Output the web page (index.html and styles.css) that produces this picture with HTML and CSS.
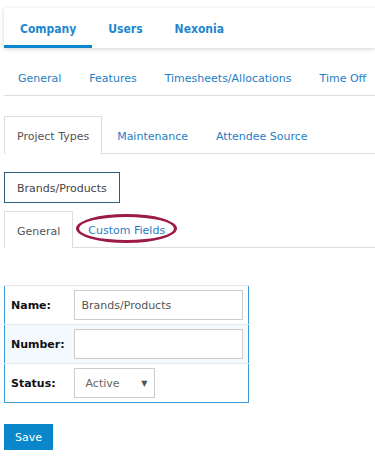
FILE: index.html
```html
<!DOCTYPE html>
<html>
    <head>
        <title>Settings - Brands/Products</title>
        <link rel="stylesheet" href="styles.css">
    </head>
    <body>
        <div class="page">
            <nav class="topnav">
                <a class="active">Company</a>
                <a>Users</a>
                <a>Nexonia</a>
            </nav>

            <nav class="subnav">
                <a>General</a>
                <a>Features</a>
                <a>Timesheets/Allocations</a>
                <a>Time Off</a>
            </nav>

            <div class="tabs main-tabs">
                <a class="active">Project Types</a>
                <a>Maintenance</a>
                <a>Attendee Source</a>
            </div>

            <div class="crumb">Brands/Products</div>

            <div class="tabs detail-tabs">
                <a class="active">General</a>
                <a class="circled">Custom Fields</a>
            </div>

            <table class="form">
                <tr>
                    <td class="label">Name:</td>
                    <td><input type="text" value="Brands/Products"></td>
                </tr>
                <tr class="alt">
                    <td class="label">Number:</td>
                    <td><input type="text" value=""></td>
                </tr>
                <tr>
                    <td class="label">Status:</td>
                    <td>
                        <div class="select">
                            <span>Active</span>
                            <span class="arrow">&#9660;</span>
                        </div>
                    </td>
                </tr>
            </table>

            <button class="save">Save</button>
        </div>
    </body>
</html>
```

FILE: styles.css
```css
*{
    margin: 0;
    padding: 0;
    box-sizing: border-box;
}
body{
    background: #fff;
    font-family: "DejaVu Sans", Verdana, sans-serif;
    font-size: 11px;
    color: #555;
}
a{
    color: #1f7dc4;
    text-decoration: none;
}
.page{
    padding: 8px 0 0 4px;
}

/* top navigation */
.topnav{
    display: flex;
    height: 40px;
    background: #fff;
    box-shadow: 0 1px 4px rgba(0,0,0,0.18);
}
.topnav a{
    display: flex;
    align-items: center;
    padding: 5px 16px 0;
    font-family: "DejaVu Sans Condensed", "DejaVu Sans", sans-serif;
    font-size: 12px;
    font-weight: bold;
    color: #1f86d0;
    border-bottom: 3px solid transparent;
}
.topnav a.active{
    border-bottom-color: #0a86cd;
}

/* second level */
.subnav{
    display: flex;
    height: 48px;
    align-items: center;
    border-bottom: 1px solid #ddd;
    padding-top: 13px;
    white-space: nowrap;
    overflow: hidden;
}
.subnav a{
    padding: 0 14px;
}

/* tab strips */
.tabs{
    display: flex;
    border-bottom: 1px solid #ddd;
}
.tabs a{
    display: flex;
    align-items: center;
    padding: 2px 12px 0;
    margin-right: 2px;
    border: 1px solid transparent;
    border-bottom: 0;
}
.tabs a.active{
    color: #555;
    border-color: #ddd;
    background: #fff;
    margin-bottom: -1px;
}
.main-tabs{
    margin-top: 20px;
    height: 38px;
}
.detail-tabs{
    margin-top: 8px;
    height: 37px;
}
.crumb{
    display: flex;
    align-items: center;
    width: fit-content;
    margin-top: 18px;
    height: 31px;
    padding: 1px 12px 0;
    border: 1px solid #2b5f7c;
    color: #444;
}

.circled{
    position: relative;
}
.circled::after{
    content: "";
    position: absolute;
    left: 0;
    right: 0;
    top: 2px;
    bottom: 4px;
    border: 3px solid #9c1a47;
    border-radius: 50%;
}

/* form */
.form{
    margin-top: 37px;
    border-collapse: collapse;
    border: 1px solid #3c9ad9;
    font-size: 11px;
}
.form tr{
    height: 39px;
    border-top: 1px solid #e2e8ec;
}
.form tr.alt{
    background: #f4f9fd;
}
.form td{
    padding: 0 5px 0 0;
}
.form td.label{
    width: 69px;
    padding: 1px 0 0 6px;
    font-weight: bold;
    color: #111;
}
.form input{
    display: block;
    width: 169px;
    height: 30px;
    border: 1px solid #ccc;
    background: #fff;
    padding: 1px 7px 0;
    font-family: "DejaVu Sans", Verdana, sans-serif;
    font-size: 11px;
    color: #555;
    outline: 0;
}
.select{
    display: flex;
    align-items: center;
    justify-content: space-between;
    width: 81px;
    height: 30px;
    border: 1px solid #ccc;
    background: #fff;
    padding: 1px 6px 0 11px;
    color: #666;
}
.select .arrow{
    font-size: 8px;
    color: #555;
}

.save{
    display: block;
    margin-top: 21px;
    height: 26px;
    width: 49px;
    border: 0;
    background: #0a86cb;
    color: #fff;
    font-family: "DejaVu Sans", Verdana, sans-serif;
    font-size: 11px;
}
```
